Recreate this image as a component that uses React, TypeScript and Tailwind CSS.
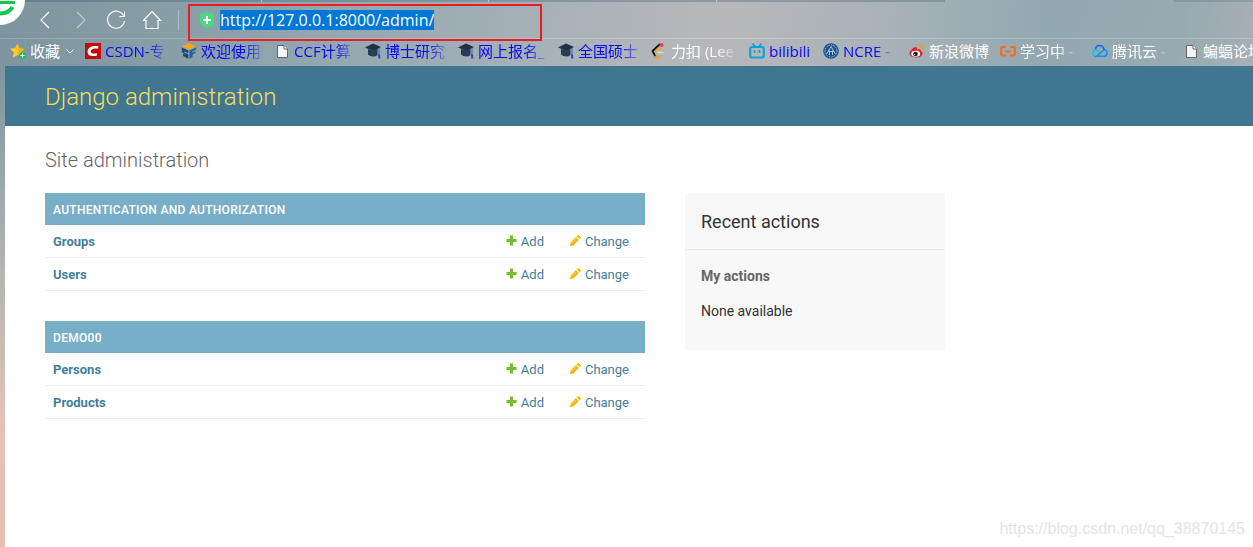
import React from 'react';

interface Bookmark {
    label: string;
    icon: React.ReactNode;
    width: string;
    tone: string;
}

interface AppModule {
    name: string;
    models: string[];
}

const BLUE = 'text-[#0808f5]';
const WHITE = 'text-white';

const StarIcon = () => (
    <svg className="h-4 w-4 shrink-0" viewBox="0 0 16 16">
        <path d="M7.500 .5l2.200 4.700 5.100.6-3.800 3.500 1 5.200-4.500-2.600L3 14.500l1-5.200L.2 5.800l5.100-.6z" fill="#fdb913" />
        <path d="M7.500 .5v11.400L3 14.500l1-5.200L.2 5.800l5.100-.6z" fill="#ffc933" />
        <circle cx="12.500" cy="12.500" r="3.500" fill="#16c45a" />
        <path d="M12.500 10.500v4M10.500 12.500h4" stroke="#fff" strokeWidth="1.200" />
    </svg>
);

const CsdnIcon = () => (
    <svg className="h-4 w-4 shrink-0" viewBox="0 0 16 16">
        <path d="M0 0h16v16H0z" fill="#c80707" />
        <path d="M13.500 3.200 13 5.800C8.500 5.200 6.200 6 5.800 8.200c-.4 2.200 2 2.700 6.400 2l-.4 2.600C5.600 13.700 2.200 12.300 2.600 8.200 3 4.200 7 2.200 13.500 3.200z" fill="#fff" />
    </svg>
);

const CubeIcon = () => (
    <svg className="h-4 w-4 shrink-0" viewBox="0 0 16 16">
        <path d="M8 0 14.800 3.300 8 6.800 1.200 3.300z" fill="#f9a61a" />
        <path d="M.8 4.500 7.300 7.500v2.700L3.500 8.500v1.300l3.800 1.800v4.100L2 13v-2.300l2.500.8L.8 9z" fill="#1b4a7a" />
        <path d="M15.200 4.500 8.500 7.500v8.200l3-1.500v-2.700l3-1.500V8.200l-3 1.500V8.300l3.700-1.600z" fill="#23639c" />
    </svg>
);

const DocIcon = () => (
    <svg className="h-4 w-[14px] shrink-0" viewBox="0 0 14 16">
        <path d="M1.500 2.500H8L11.500 6V14.500H1.500z" fill="#f4f4f4" stroke="#62676b" />
        <path d="M8 2.500V6H11.500" fill="#fff" stroke="#62676b" />
    </svg>
);

const CapIcon = () => (
    <svg className="h-4 w-4 shrink-0" viewBox="0 0 16 16">
        <path d="M0 4.500 8 .5l8 3.500-7.500 4z" fill="#1d3145" />
        <path d="M3 6v5.500c2 2 6.500 3 9.500.5V5.500L8.500 7.500z" fill="#263f57" />
        <path d="M14 5v8" stroke="#4762a8" />
        <path d="M13 11.500h2l.3 4h-2z" fill="#3040c8" />
    </svg>
);

const LeetcodeIcon = () => (
    <svg className="h-4 w-4 shrink-0" viewBox="0 0 16 16" fill="none" strokeLinecap="round" strokeLinejoin="round">
        <path d="M8.500 1.500 1.500 8l3 5.500" stroke="#161616" strokeWidth="1.800" />
        <path d="M10 6C8 4.800 6.500 5.500 5.500 7.500M4.500 13.500c2 2 4 1.500 5.500-.5" stroke="#f5a21c" strokeWidth="1.800" />
        <path d="M7 9.500h5" stroke="#d6d6d6" strokeWidth="1.500" />
        <circle cx="10.500" cy="2" r="2" fill="#d9474b" />
    </svg>
);

const BilibiliIcon = () => (
    <svg className="h-4 w-4 shrink-0" viewBox="0 0 16 16" fill="none" stroke="#0ea2da" strokeWidth="2.200" strokeLinecap="round">
        <path d="M4 1.200 6 3.500M12 1.200 10 3.500" strokeWidth="1.800" />
        <rect x="1.200" y="4" width="13.600" height="10.500" rx="2" />
        <path d="M5.500 8v1.200M10.500 8v1.200" strokeWidth="1.800" />
    </svg>
);

const NcreIcon = () => (
    <svg className="h-4 w-4 shrink-0" viewBox="0 0 16 16" fill="none">
        <circle cx="8" cy="8" r="7.800" fill="#1e548f" />
        <circle cx="8" cy="8" r="6" stroke="#a9bdd0" strokeDasharray="1.500 1" />
        <path d="M3.500 11 8 3.500l4.500 7.500M5 8.500h6M6.500 12V7.500M9.500 12V7.500" stroke="#a9c3da" />
    </svg>
);

const WeiboIcon = () => (
    <svg className="h-4 w-4 shrink-0" viewBox="0 0 16 16" fill="none">
        <path d="M6.500 4C4 4.500 .5 8 .5 10.500c0 5 13 5.500 13 0 0-1.500-1-2-1.500-2.500 0-2-2-2-4-1 .5-2-.3-3-1.500-3z" fill="#dd2430" />
        <ellipse cx="6.700" cy="10.700" rx="4.500" ry="3" fill="#fff" />
        <circle cx="6.500" cy="11" r="2.300" fill="#161616" />
        <circle cx="5.800" cy="11.500" r=".7" fill="#fff" />
        <path d="M10 1.500c3.500-.5 5.500 2 4.800 5M10.300 4c1.500-.2 2.300.7 2 2.200" stroke="#f0a01e" strokeWidth="1.500" strokeLinecap="round" />
    </svg>
);

const AliyunIcon = () => (
    <svg className="h-4 w-4 shrink-0" viewBox="0 0 16 16" fill="none" stroke="#fb6a14" strokeWidth="2.200">
        <path d="M6 4H3C1.500 4 1 4.500 1 6v4.500c0 1.500.5 2 2 2h3M10 4h3c1.500 0 2 .5 2 2v4.500c0 1.500-.5 2-2 2h-3M5.500 8.300h5" />
    </svg>
);

const TencentCloudIcon = () => (
    <svg className="h-4 w-4 shrink-0" viewBox="0 0 16 16" fill="none" strokeWidth="1.600" strokeLinecap="round">
        <path d="M3.500 6.500C4 1.500 11 1 12 6.500" stroke="#1269e8" />
        <path d="M8 9.500C5 6 1 6.500 1 10c0 2 1.500 3.300 3.500 3.300" stroke="#0bc6e8" />
        <path d="M4.500 13.300 10.500 8C12.500 6 15 7.500 15 10c0 2-1.200 3.300-3.500 3.300z" stroke="#118ff0" />
    </svg>
);

const bookmarks: Bookmark[] = [
    { label: 'CSDN-专', icon: <CsdnIcon />, width: 'w-24', tone: BLUE },
    { label: '欢迎使用', icon: <CubeIcon />, width: 'w-[95px]', tone: BLUE },
    { label: 'CCF计算', icon: <DocIcon />, width: 'w-[89px]', tone: BLUE },
    { label: '博士研究', icon: <CapIcon />, width: 'w-[93px]', tone: BLUE },
    { label: '网上报名_', icon: <CapIcon />, width: 'w-[100px]', tone: BLUE },
    { label: '全国硕士', icon: <CapIcon />, width: 'w-[93px]', tone: BLUE },
    { label: '力扣 (Lee', icon: <LeetcodeIcon />, width: 'w-[98px]', tone: WHITE },
    { label: 'bilibili', icon: <BilibiliIcon />, width: 'w-[74px]', tone: BLUE },
    { label: 'NCRE -', icon: <NcreIcon />, width: 'w-[86px]', tone: BLUE },
    { label: '新浪微博', icon: <WeiboIcon />, width: 'w-[91px]', tone: WHITE },
    { label: '学习中 -', icon: <AliyunIcon />, width: 'w-[92px]', tone: WHITE },
    { label: '腾讯云 -', icon: <TencentCloudIcon />, width: 'w-[93px]', tone: WHITE },
    { label: '蝙蝠论坛', icon: <DocIcon />, width: 'w-24', tone: WHITE },
];

const modules: AppModule[] = [
    { name: 'Authentication and Authorization', models: ['Groups', 'Users'] },
    { name: 'Demo00', models: ['Persons', 'Products'] },
];

const BookmarkLink: React.FC<{ bookmark: Bookmark }> = ({ bookmark }) => {
    const fades = !['bilibili', '新浪微博', '蝙蝠论坛'].includes(bookmark.label);
    return (
        <a href="#" className={`flex shrink-0 items-center gap-1 ${bookmark.width} ${bookmark.tone}`}>
            {bookmark.icon}
            <span
                className={`whitespace-nowrap ${
                    fades ? '[mask-image:linear-gradient(to_right,black_70%,rgb(0_0_0/0.25))]' : ''
                }`}
            >
                {bookmark.label}
            </span>
        </a>
    );
};

const BrowserChrome = () => (
    <div className="relative overflow-hidden font-['Open_Sans','Noto_Sans_CJK_SC',sans-serif]">
        {/* Bottom edge of the tab strip */}
        <div className="mb-1 flex h-[2px]">
            <div className="w-[262px] shrink-0 border-r border-white/40 bg-[#3d5560]/30"></div>
            <div className="w-[227px] shrink-0 border-r border-white/40 bg-[#3d5560]/30"></div>
            <div className="w-[228px] shrink-0 border-r border-white/40 bg-[#3d5560]/30"></div>
            <div className="w-[228px] shrink-0 bg-[#3d5560]/30"></div>
            <div className="w-[229px] shrink-0"></div>
            <div className="grow bg-[#3d5560]/20"></div>
        </div>

        {/* Navigation bar */}
        <div className="flex h-[33px] items-start border-b border-white/20 pl-[35px] text-white">
            <div className="flex items-center gap-4 pt-1">
                <button aria-label="Back">
                    <svg className="h-5 w-5" viewBox="0 0 20 20" fill="none" stroke="currentColor"><path strokeWidth="1.200" d="M14 2 6 10l8 8"></path></svg>
                </button>
                <button aria-label="Forward" className="text-white/50">
                    <svg className="h-5 w-5" viewBox="0 0 20 20" fill="none" stroke="currentColor"><path strokeWidth="1.200" d="m6 2 8 8-8 8"></path></svg>
                </button>
                <button aria-label="Reload">
                    <svg className="h-5 w-5" viewBox="0 0 20 20" fill="none" stroke="currentColor"><path strokeWidth="1.200" d="M16.500 5.500A8.500 8.500 0 1 0 17.500 11M17.500 1.500V6.500H12.500"></path></svg>
                </button>
                <button aria-label="Home">
                    <svg className="h-5 w-5" viewBox="0 0 20 20" fill="none" stroke="currentColor"><path strokeWidth="1.200" d="M.500 10.500 9 1.500l8.500 9h-2.500V18.500H3V10.500z"></path></svg>
                </button>
            </div>
            <div className="mt-1 ml-[15px] h-5 w-px bg-white/30"></div>
            <div className="relative ml-[9px] flex w-[354px] items-center pt-1 pl-3">
                <svg className="h-4 w-[14px]" viewBox="0 0 14 16">
                    <path d="M0 1.500Q4 2 7 0q3 2 7 1.500V10q-1 4-7 6-6-2-7-6z" fill="#4bd681" />
                    <path d="M7 4v8M3 8h8" stroke="#fff" strokeWidth="2" />
                </svg>
                <input
                    aria-label="Address"
                    type="text"
                    defaultValue="http://127.0.0.1:8000/admin/"
                    className="ml-[6px] h-5 field-sizing-content bg-[#0078d7] text-base leading-5 text-white outline-none"
                />
                <div className="pointer-events-none absolute inset-x-0 -top-[2px] h-[37px] border-2 border-[#ed1c24]"></div>
            </div>
        </div>

        {/* Bookmarks bar */}
        <div className="flex h-[27px] items-start pt-[2px] pl-[10px] text-[15px] leading-5">
            <button className="flex w-[75px] shrink-0 items-center gap-1 text-white">
                <StarIcon />
                收藏
                <svg className="ml-[2px] h-2 w-2" viewBox="0 0 8 8" fill="none" stroke="currentColor"><path d="M.5 2.500 4 6l3.500-3.500"></path></svg>
            </button>
            {bookmarks.map((bookmark) => (
                <BookmarkLink key={bookmark.label} bookmark={bookmark} />
            ))}
        </div>

        {/* Browser badge in the window corner */}
        <svg className="absolute top-0 left-0 h-[26px] w-[26px]" viewBox="0 0 26 26" fill="none">
            <circle cx="0" cy="0" r="25" fill="#fff" />
            <path d="M0 2.500h15" stroke="#0ccb4f" strokeWidth="3" />
            <path d="M0 13.500C5 13.500 10 11.500 12.500 7" stroke="#0ccb4f" strokeWidth="4" />
        </svg>
    </div>
);

const ModuleTable: React.FC<{ module: AppModule }> = ({ module }) => (
    <table className="mb-[30px] w-full text-[13px] leading-4 text-[#447e9b]">
        <caption className="bg-[#79aec8] px-2 pt-[9px] pb-[7px] text-left text-xs leading-4 font-medium tracking-wide text-white uppercase">
            <a href="#">{module.name}</a>
        </caption>
        <tbody>
            {module.models.map((model) => (
                <tr key={model} className="border-b border-[#eee]">
                    <th scope="row" className="px-2 pt-[9px] pb-[7px] text-left font-bold">
                        <a href="#">{model}</a>
                    </th>
                    <td className="w-16 pt-[9px] pr-2 pb-[7px]">
                        <a href="#" className="flex items-start justify-end gap-1">
                            <svg className="mt-px h-[11px] w-[11px]" viewBox="0 0 11 11"><path d="M4 .5h3V4h3.500v3H7v3.500H4V7H.5V4H4z" fill="#70bf2b" /></svg>
                            Add
                        </a>
                    </td>
                    <td className="w-[93px] pt-[9px] pr-4 pb-[7px]">
                        <a href="#" className="flex items-start justify-end gap-1">
                            <svg className="mt-px h-[11px] w-[11px]" viewBox="0 0 11 11">
                                <path d="M0 11 .6 7.500 6 2.100 8.900 5 3.500 10.400zM6.700 1.400 7.700.4q.7-.6 1.400 0L10.600 1.900q.6.700 0 1.400L9.600 4.300z" fill="#efb80b" />
                                <path d="M2 7.800 6.300 3.500" stroke="#f9dc7a" strokeWidth=".7" />
                            </svg>
                            Change
                        </a>
                    </td>
                </tr>
            ))}
        </tbody>
    </table>
);

const App: React.FC = () => {
    return (
        <div className="flex min-h-screen flex-col bg-[linear-gradient(to_bottom,transparent_12%,#bcb9b5_55%,#e5c2b8_78%,#e6c1b2),linear-gradient(100deg,#7d949e,#90a6ae_22%,#a3b0b6_38%,#b8b8bb_54%,#a8b2b8_66%,#92a8b1_78%,#98aab1_88%,#b8b5ba)]">
            <BrowserChrome />
            <div className="ml-[5px] flex grow flex-col bg-white font-[Roboto,sans-serif] text-[#333]">
                <header className="bg-[#417690] px-10 pt-[15px] pb-[13px]">
                    <h1 className="text-2xl leading-8 font-light text-[#f5dd5d]">
                        <a href="#">Django administration</a>
                    </h1>
                </header>
                <main className="px-10 pt-5">
                    <h2 className="mb-[19px] text-xl leading-7 font-light text-[#666]">Site administration</h2>
                    <div className="flex items-start gap-10">
                        <div className="w-[600px]">
                            {modules.map((module) => (
                                <ModuleTable key={module.name} module={module} />
                            ))}
                        </div>
                        <aside className="w-[260px] bg-[#f8f8f8] pb-[29px]">
                            <h2 className="border-b border-[#eaeaea] px-4 pt-[17px] pb-[15px] text-lg leading-6 font-normal">Recent actions</h2>
                            <h3 className="mt-4 px-4 text-sm leading-5 font-bold text-[#666]">My actions</h3>
                            <p className="mt-[15px] px-4 text-sm leading-5">None available</p>
                        </aside>
                    </div>
                </main>
                <p className="mt-auto self-end pr-2 pb-2 font-['Liberation_Sans',sans-serif] text-base leading-5 text-[#e4e4e4]">
                    https://blog.csdn.net/qq_38870145
                </p>
            </div>
        </div>
    );
};

export default App;
